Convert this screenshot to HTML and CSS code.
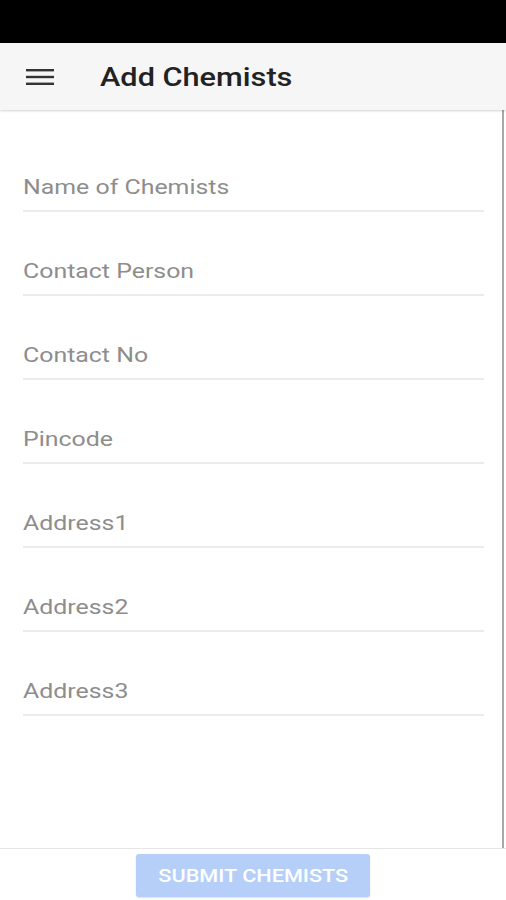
FILE: index.html
```html
<!DOCTYPE html>
<html>
<head>
<meta charset="utf-8">
<link rel="stylesheet" href="styles.css">
</head>
<body>
<div class="status"></div>
<header class="appbar">
  <svg class="menu" width="28" height="18" viewBox="0 0 28 18">
    <rect x="0" y="1" width="28" height="2.4" fill="#333"/>
    <rect x="0" y="7.8" width="28" height="2.4" fill="#333"/>
    <rect x="0" y="14.6" width="28" height="2.4" fill="#333"/>
  </svg>
  <h1 class="title"><span class="wide">Add Chemists</span></h1>
</header>
<main class="content">
  <div class="field"><span class="label">Name of Chemists</span></div>
  <div class="field"><span class="label">Contact Person</span></div>
  <div class="field"><span class="label">Contact No</span></div>
  <div class="field"><span class="label">Pincode</span></div>
  <div class="field"><span class="label">Address1</span></div>
  <div class="field"><span class="label">Address2</span></div>
  <div class="field"><span class="label">Address3</span></div>
</main>
<footer class="footer">
  <button class="submit"><span class="btn-text">SUBMIT CHEMISTS</span></button>
</footer>
</body>
</html>
```
FILE: styles.css
```css
* { box-sizing: border-box; }
html, body { margin: 0; padding: 0; }
body {
  width: 506px;
  height: 900px;
  overflow: hidden;
  background: #fff;
  font-family: Roboto, "Liberation Sans", sans-serif;
}
.status { height: 43px; background: #000; }
.appbar {
  height: 67px;
  background: #f6f6f6;
  display: flex;
  align-items: center;
  padding-left: 26px;
  box-shadow: 0 1px 2px rgba(0,0,0,0.18);
  position: relative;
  z-index: 1;
}
.menu { display: block; }
.title {
  margin: 0 0 0 46px;
  font-size: 26px;
  font-weight: 500;
  color: #222;
}
.wide {
  display: inline-block;
  transform: scaleX(1.18);
  transform-origin: left center;
}
.content {
  width: 504px;
  height: 738px;
  border-right: 2px solid #a8a8a8;
  padding: 18px 0 0 23px;
}
.field {
  width: 461px;
  height: 84px;
  border-bottom: 2px solid #ebebeb;
  display: flex;
  align-items: flex-end;
  padding-bottom: 11px;
}
.label {
  display: inline-block;
  font-size: 21px;
  color: #8d8d8d;
  transform: scaleX(1.185);
  transform-origin: left center;
}
.footer {
  height: 52px;
  border-top: 1px solid #e6e6e6;
  display: flex;
  justify-content: center;
  padding-top: 5px;
}
.submit {
  width: 234px;
  height: 43px;
  border: none;
  border-radius: 3px;
  background: #b5cff8;
  color: #fff;
  font-family: Roboto, "Liberation Sans", sans-serif;
  font-size: 19px;
  font-weight: 500;
  box-shadow: 0 1px 2px rgba(0,0,0,0.12);
  padding: 0;
}
.btn-text {
  display: inline-block;
  transform: scaleX(1.14);
}
```
